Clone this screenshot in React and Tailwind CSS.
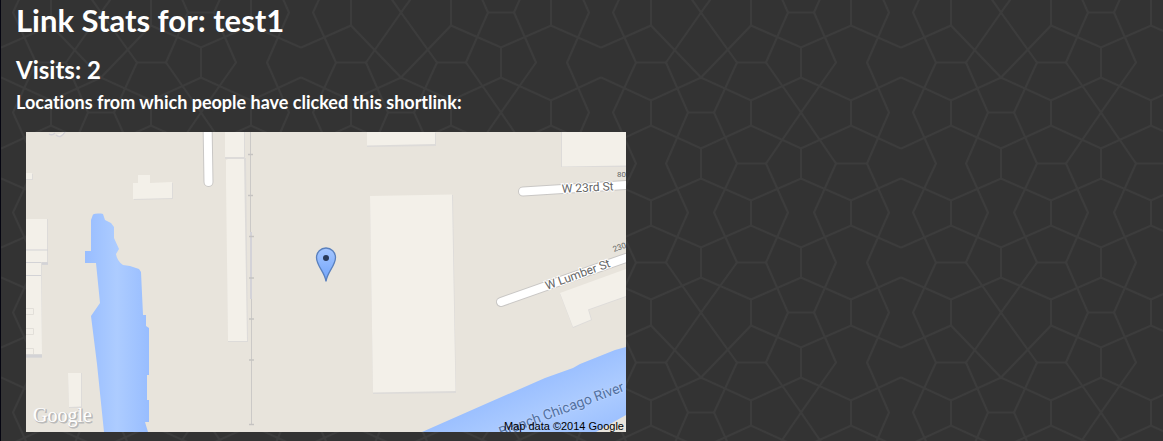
const waves = [
  'M1 47L51 25L101 77L151 25L201 47L251 25L301 47',
  'M1 77L51 100L101 77L151 100L201 77L251 100L301 77',
  'M1 148L51 125L101 148L151 125L201 148L251 125L301 148',
  'M1 178L51 200L101 178L151 200L201 178L251 200L301 178',
  'M1 247L51 225L101 247L151 225L201 247L251 225L301 247',
  'M1 277L51 299L101 277L151 299L201 277L251 299L301 277',
  'M36 -38L13 12L36 62L13 112L36 163L13 212L36 262L13 312',
  'M66 -38L101 12L66 62L88 112L66 163L88 212L66 262L101 312',
  'M137 -38L101 12L137 62L114 112L137 163L114 212L137 262L101 312',
  'M166 -38L188 12L166 62L201 112L166 163L188 212L166 262L188 312',
  'M236 -38L214 12L236 62L201 112L236 163L214 212L236 262L214 312',
  'M267 -38L289 12L267 62L289 112L267 163L289 212L267 262L289 312',
  'M51 -1V25M151 -1V25M251 -1V25M51 100V125M151 100V125M251 100V125M51 200V225M151 200V225M251 200V225',
  'M51 299V301M151 299V301M251 299V301',
  'M201 47V77M101 148V178M201 148V178M101 247V277M201 247V277',
  'M188 12H214M36 62H66M137 62H166M88 112H114M137 163H166M236 163H267M36 262H66M137 262H166',
];

function Backdrop() {
  return (
    <svg className="absolute inset-0 h-full w-full" aria-hidden="true">
      <defs>
        <pattern id="lattice" width="300" height="300" patternUnits="userSpaceOnUse">
          <g transform="translate(-1 0.5)" fill="none" stroke="#3c3c3c" strokeWidth="2">
            {waves.map((d) => (
              <path key={d} d={d} />
            ))}
          </g>
        </pattern>
      </defs>
      <rect width="100%" height="100%" fill="url(#lattice)" />
    </svg>
  );
}

function LocationMap() {
  return (
    <svg
      role="img"
      aria-label="Map of visitor locations"
      viewBox="26 132 600 300"
      className="block h-auto w-full"
    >
      <defs>
        <linearGradient id="canal" x1="0" x2="1" y1="0" y2="0">
          <stop offset="0" stopColor="#98bdff" />
          <stop offset="0.5" stopColor="#adccff" />
          <stop offset="1" stopColor="#98bdff" />
        </linearGradient>
        <linearGradient id="river" gradientUnits="userSpaceOnUse" x1="540" y1="375" x2="572" y2="450">
          <stop offset="0" stopColor="#99beff" />
          <stop offset="0.5" stopColor="#adccff" />
          <stop offset="1" stopColor="#99beff" />
        </linearGradient>
        <linearGradient id="pin" x1="0" x2="0" y1="0" y2="1">
          <stop offset="0" stopColor="#a5c6ff" />
          <stop offset="1" stopColor="#6fa3fa" />
        </linearGradient>
      </defs>
      <rect x="26" y="132" width="600" height="300" fill="#e8e4dc" />

      <g fill="#dddbd9">
        <path d="M26 174H33V180H26ZM134 184L173 183V199L134 200ZM367 133H436V146L367 147ZM225 132H245V159H225ZM227 160L246 158L248 342H228ZM370 197L453 195L456 393L373 394ZM561 132H626V167H561ZM68 373H82V408H69ZM26 219H48V265H26ZM26 263H42V358H26ZM560 294L626 271V297L589 310L592 320L573 328Z" />
      </g>
      <g fill="#f3f0e9">
        <path d="M26 173H32V179H26ZM133 183H138V175H150V183L172 182V198L133 199ZM367 132H435V144L367 145.500ZM225 132H244V157H225ZM226 160L228 159H244L247 341H228L226 180ZM370 196L452 194.500L455.500 391L373 392.500ZM562 132H626V165.500L562 166.500ZM68 373H81V406.500L69 407ZM26 219H47V262H26ZM26 263H41L42 354H26ZM560 293L626 269V296L588 309.500L591 319.500L573 327Z" />
      </g>
      <path d="M26 250H48M26 262.500H41M26 275.500H41" stroke="#d3d3d6" fill="none" />
      <path d="M42 263.500H48M26 356H42" stroke="#d3d3d6" strokeWidth="2.500" fill="none" />
      <path d="M26 308.500H33.500V314.500H26M26 328.500H33.500V334.500H26M26 348.500H33.500V354" stroke="#e2dfd9" fill="none" />
      <path d="M49 134Q52 136 55 133M56 135Q61 139 65 132" stroke="#d5d3d8" strokeWidth="1.500" fill="#f3f0e9" />

      <path d="M250.500 132V235M251.500 299V425" stroke="#cbc9c7" fill="none" />
      <path d="M251 232V299" stroke="#d3d2d8" strokeWidth="2" fill="none" />
      <path d="M248 154.500H253M248 195.500H253M249 236.500H254M249 278H254M249 319H254M249 360H254M249 424.500H254" stroke="#c5c3c1" strokeWidth="1.500" fill="none" />

      <path d="M91 220L93 214.500Q95 213 101 213.500L103 214L105 220L111 223L114 227V238L119 249L116 254Q117 261 123 265L130 266L139 269L141 272L143 315H146V326L149 328V375H147V400H149V422H145L148 432H104L97 364L91 316L100 303L96 263H85V251H91Z" fill="url(#canal)" />
      <path d="M422 432L490 402L545 378L573 368L580 364L615 350L626 347V415L596 432Z" fill="url(#river)" />

      <g fill="none" strokeLinecap="round">
        <path d="M207.500 120L208.500 182" stroke="#c9c7c5" strokeWidth="10" />
        <path d="M207.500 120L208.500 182" stroke="#fff" strokeWidth="8" />
        <path d="M523 191.500L640 184M501 302L640 253" stroke="#c9c7c5" strokeWidth="10" />
        <path d="M523 191.500L640 184M501 302L640 253" stroke="#fff" strokeWidth="8" />
      </g>

      <g fontFamily="Roboto, sans-serif" fill="#666" stroke="#fff" strokeWidth="2" paintOrder="stroke">
        <text x="562" y="193" fontSize="12" transform="rotate(-3 562 193)">W 23rd St</text>
        <text x="547" y="290" fontSize="12" transform="rotate(-20 547 290)">W Lumber St</text>
        <g fontSize="8" stroke="#e8e4dc">
          <text x="617" y="177">80</text>
          <text x="614" y="252" transform="rotate(-20 614 252)">230</text>
        </g>
      </g>
      <text x="501" y="437" fontFamily="Roboto, sans-serif" fontSize="14" fill="#52719f" stroke="#b9d2ff" strokeWidth="1.500" paintOrder="stroke" transform="rotate(-20.500 501 437)">Branch Chicago River</text>

      <path d="M326 281.500C325 272 316.500 266 316.500 257.500A9.500 9.500 0 0 1 335.500 257.500C335.500 266 327 272 326 281.500Z" fill="url(#pin)" stroke="#5a80bd" strokeWidth="1.300" />
      <circle cx="326" cy="258" r="3" fill="#293a5a" />

      <text x="34" y="423" fontFamily="'Liberation Serif', serif" fontSize="20" fill="#aaa" stroke="#bbb">Google</text>
      <text x="33" y="422" fontFamily="'Liberation Serif', serif" fontSize="20" fill="#fff">Google</text>
      <text x="624" y="430" textAnchor="end" fontFamily="'Liberation Sans', sans-serif" fontSize="11" fill="#000">Map data ©2014 Google</text>
    </svg>
  );
}

export default function App() {
  return (
    <div className="relative min-h-screen border-l border-[#050510] bg-[#333333] font-['Lato',sans-serif] text-white [font-variant-ligatures:none]">
      <Backdrop />
      <main className="relative px-[15px] pb-2">
        <h1 className="text-[31px] font-bold leading-10">Link Stats for: test1</h1>
        <h2 className="mt-3 text-[24px] font-bold leading-9">Visits: 2</h2>
        <h3 className="text-[18px] font-bold leading-7">Locations from which people have clicked this shortlink:</h3>
        <div className="mx-[10px] mt-4 max-w-[600px]">
          <LocationMap />
        </div>
      </main>
    </div>
  );
}
